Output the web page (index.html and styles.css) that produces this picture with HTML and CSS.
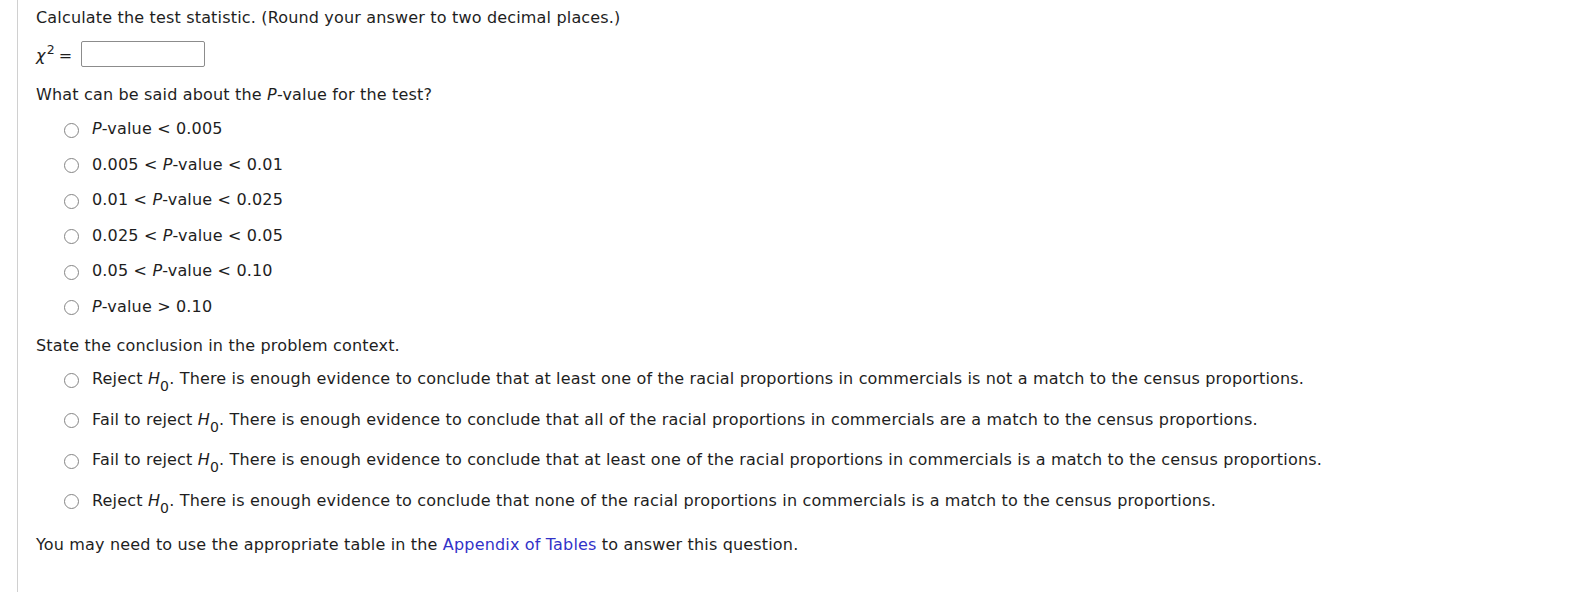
FILE: index.html
```html
<!DOCTYPE html>
<html lang="en">
<head>
<meta charset="utf-8">
<title>Chi-square test</title>
<link rel="stylesheet" href="styles.css">
</head>
<body>
<div class="frame">
  <p class="prompt title">Calculate the test statistic. (Round your answer to two decimal places.)</p>
  <div class="chirow">
    <span class="chi"><i>χ</i><sup>2</sup><span class="eq">=</span></span>
    <span class="answer"></span>
  </div>
  <p class="prompt q2">What can be said about the <i>P</i>-value for the test?</p>
  <ul class="choices pvals">
    <li><span class="radio"></span><span class="label"><i>P</i>-value &lt; 0.005</span></li>
    <li><span class="radio"></span><span class="label">0.005 &lt; <i>P</i>-value &lt; 0.01</span></li>
    <li><span class="radio"></span><span class="label">0.01 &lt; <i>P</i>-value &lt; 0.025</span></li>
    <li><span class="radio"></span><span class="label">0.025 &lt; <i>P</i>-value &lt; 0.05</span></li>
    <li><span class="radio"></span><span class="label">0.05 &lt; <i>P</i>-value &lt; 0.10</span></li>
    <li><span class="radio"></span><span class="label"><i>P</i>-value &gt; 0.10</span></li>
  </ul>
  <p class="prompt q3">State the conclusion in the problem context.</p>
  <ul class="choices concl">
    <li><span class="radio"></span><span class="label">Reject <i>H</i><sub>0</sub>. There is enough evidence to conclude that at least one of the racial proportions in commercials is not a match to the census proportions.</span></li>
    <li><span class="radio"></span><span class="label">Fail to reject <i>H</i><sub>0</sub>. There is enough evidence to conclude that all of the racial proportions in commercials are a match to the census proportions.</span></li>
    <li><span class="radio"></span><span class="label">Fail to reject <i>H</i><sub>0</sub>. There is enough evidence to conclude that at least one of the racial proportions in commercials is a match to the census proportions.</span></li>
    <li><span class="radio"></span><span class="label">Reject <i>H</i><sub>0</sub>. There is enough evidence to conclude that none of the racial proportions in commercials is a match to the census proportions.</span></li>
  </ul>
  <p class="prompt note">You may need to use the appropriate table in the <a href="#" class="link">Appendix of Tables</a> to answer this question.</p>
</div>
</body>
</html>
```

FILE: styles.css
```css
html, body {
  margin: 0;
  padding: 0;
  background: #ffffff;
}

body {
  font-family: "DejaVu Sans", Verdana, sans-serif;
  font-size: 16px;
  letter-spacing: 0.17px;
  color: #1e1e1e;
}

.frame {
  margin-left: 17px;
  border-left: 1px solid #d0d0d0;
  padding-left: 18px;
  padding-top: 8px;
  min-height: 592px;
  box-sizing: border-box;
}

.prompt {
  margin: 0;
  line-height: 20px;
  white-space: nowrap;
}

.chirow {
  display: flex;
  align-items: flex-end;
  height: 26px;
  margin-top: 13px;
}

.chi {
  flex: none;
  width: 45px;
  line-height: 16px;
  margin-bottom: 3px;
  white-space: nowrap;
}

.chi sup {
  font-size: 12.5px;
  line-height: 0;
  vertical-align: 7px;
  margin-left: 1px;
}

.eq {
  margin-left: 4px;
}

.answer {
  display: block;
  flex: none;
  width: 122px;
  height: 24px;
  border: 1px solid #8c8c8c;
  border-radius: 2px;
  background: #fff;
}

.q2 {
  margin-top: 18px;
}

.choices {
  list-style: none;
  margin: 0;
  padding: 0 0 0 28px;
}

.choices li {
  display: flex;
  align-items: center;
  white-space: nowrap;
}

.pvals {
  margin-top: 6.25px;
}

.pvals li {
  height: 35.5px;
}

.concl {
  margin-top: 2.5px;
}

.concl li {
  height: 40.5px;
}

.radio {
  flex: none;
  width: 13px;
  height: 13px;
  border: 1px solid #858585;
  border-radius: 50%;
  background: #fff;
  margin-top: 2px;
  margin-right: 13px;
}

.label {
  line-height: 20px;
}

.label sub {
  font-size: 14px;
  line-height: 0;
  vertical-align: -7px;
}

.q3 {
  margin-top: 12px;
}

.note {
  margin-top: 14.5px;
}

.link {
  color: #3232c8;
  text-decoration: none;
}
```
